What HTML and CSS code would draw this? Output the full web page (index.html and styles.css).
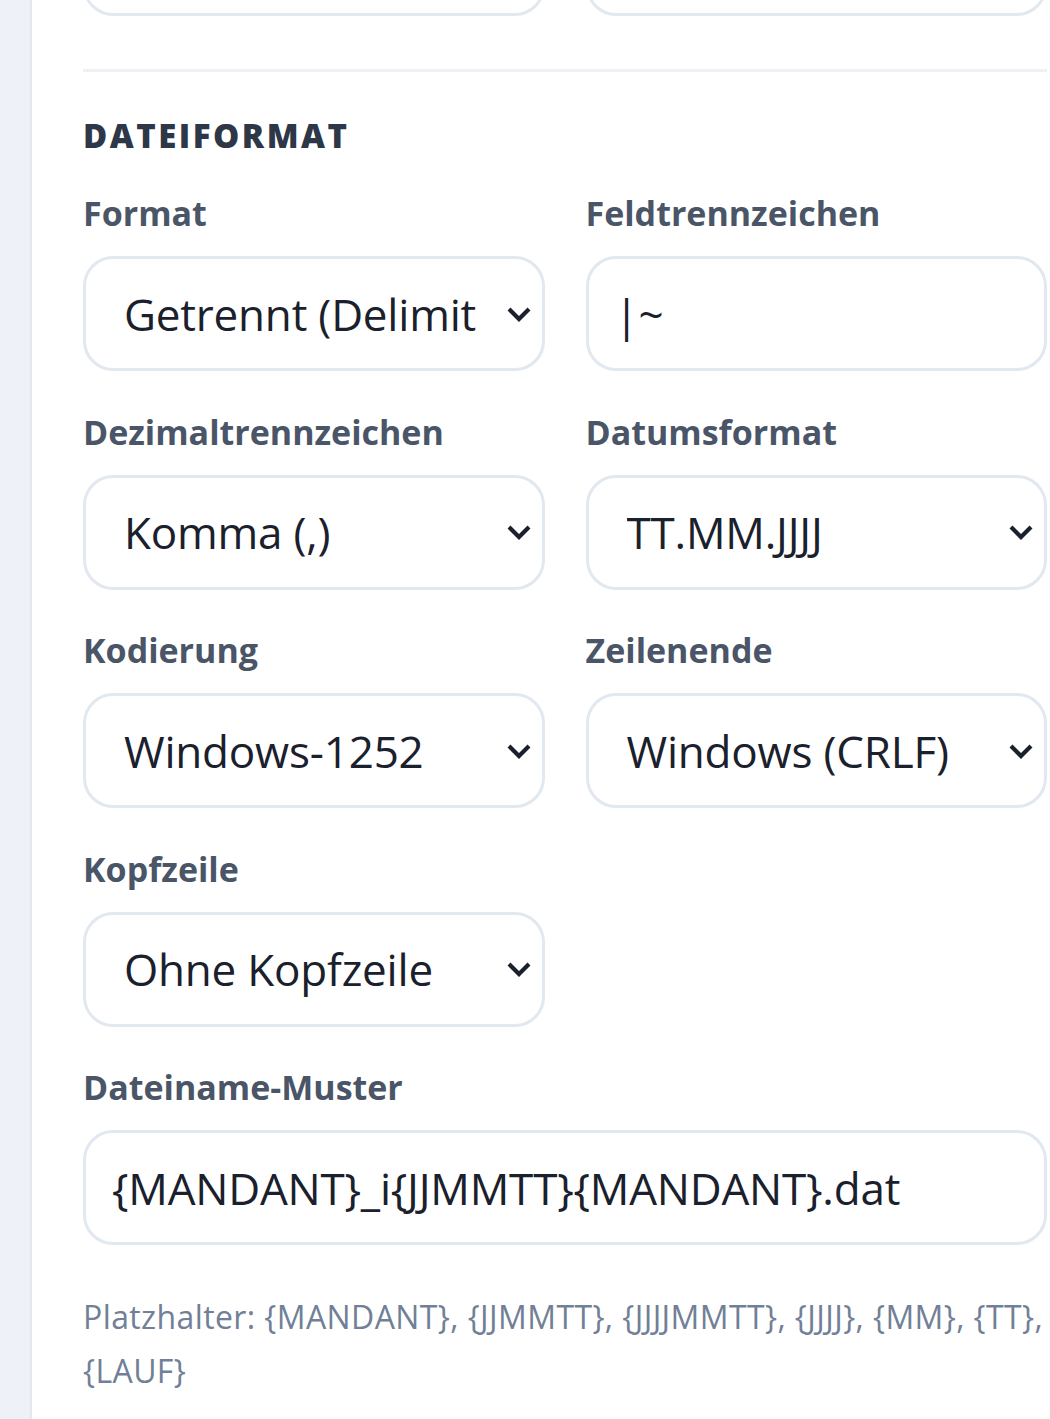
FILE: index.html
```html
<!DOCTYPE html>
<html lang="de">
  <head>
    <meta charset="UTF-8" />
    <meta name="viewport" content="width=device-width, initial-scale=1.0" />
    <title>Export-Einstellungen</title>
    <link rel="stylesheet" href="styles.css">
  </head>
  <body>
    <div class="layout">
      <aside class="sidebar"></aside>

      <main class="content">
        <div class="grid grid-top">
          <div class="field">
            <input class="control" type="text" value="" />
          </div>
          <div class="field">
            <input class="control" type="text" value="" />
          </div>
        </div>

        <hr class="divider" />

        <section class="section">
          <h2 class="section-title">Dateiformat</h2>

          <div class="grid">
            <div class="field">
              <label class="label" for="format">Format</label>
              <select id="format" class="control select">
                <option>Getrennt (Delimited)</option>
                <option>Feste Breite</option>
              </select>
            </div>

            <div class="field">
              <label class="label" for="delimiter">Feldtrennzeichen</label>
              <input id="delimiter" class="control" type="text" value="|~" />
            </div>

            <div class="field">
              <label class="label" for="decimal">Dezimaltrennzeichen</label>
              <select id="decimal" class="control select">
                <option>Komma (,)</option>
                <option>Punkt (.)</option>
              </select>
            </div>

            <div class="field">
              <label class="label" for="dateformat">Datumsformat</label>
              <select id="dateformat" class="control select">
                <option>TT.MM.JJJJ</option>
                <option>JJJJ-MM-TT</option>
              </select>
            </div>

            <div class="field">
              <label class="label" for="encoding">Kodierung</label>
              <select id="encoding" class="control select">
                <option>Windows-1252</option>
                <option>UTF-8</option>
              </select>
            </div>

            <div class="field">
              <label class="label" for="lineend">Zeilenende</label>
              <select id="lineend" class="control select">
                <option>Windows (CRLF)</option>
                <option>Unix (LF)</option>
              </select>
            </div>

            <div class="field">
              <label class="label" for="header">Kopfzeile</label>
              <select id="header" class="control select">
                <option>Ohne Kopfzeile</option>
                <option>Mit Kopfzeile</option>
              </select>
            </div>

            <div class="field field-wide">
              <label class="label" for="pattern">Dateiname-Muster</label>
              <input id="pattern" class="control" type="text" value="{MANDANT}_i{JJMMTT}{MANDANT}.dat" />
              <p class="help-text">
                Platzhalter: {MANDANT}, {JJMMTT}, {JJJJMMTT}, {JJJJ}, {MM}, {TT}, {LAUF}
              </p>
            </div>
          </div>
        </section>
      </main>
    </div>
  </body>
</html>
```

FILE: styles.css
```css
* {
  margin: 0;
  padding: 0;
  box-sizing: border-box;
}

body {
  width: 1050px;
  height: 1419px;
  overflow: hidden;
  background: #ffffff;
  font-family: "Open Sans", "Noto Sans", sans-serif;
  color: #1a202c;
}

.layout {
  display: flex;
  height: 100%;
}

.sidebar {
  flex: 0 0 32px;
  background: #eef1f7;
  border-right: 2px solid #e2e8f0;
}

.content {
  flex: 0 0 964px;
  margin-left: 51px;
}

.grid {
  display: grid;
  grid-template-columns: 1fr 1fr;
  column-gap: 41px;
  row-gap: 38.5px;
}

.grid-top {
  margin-top: -99px;
}

.field {
  display: flex;
  flex-direction: column;
}

.field-wide {
  grid-column: 1 / -1;
}

.control {
  width: 100%;
  height: 115px;
  padding: 0 26px;
  border: 3px solid #e2e8f0;
  border-radius: 30px;
  background: #ffffff;
  font-family: inherit;
  font-size: 44px;
  letter-spacing: -0.2px;
  color: #1a202c;
  outline: none;
}

.select {
  appearance: none;
  -webkit-appearance: none;
  padding: 0 65px 0 38px;
  background-image: url("data:image/svg+xml,%3Csvg xmlns='http://www.w3.org/2000/svg' width='26' height='16' viewBox='0 0 26 16'%3E%3Cpolyline points='3,3 13,13 23,3' fill='none' stroke='%231a202c' stroke-width='4.2'/%3E%3C/svg%3E");
  background-repeat: no-repeat;
  background-position: right 10px center;
  background-size: 26px 16px;
}

.divider {
  border: none;
  height: 3px;
  background: #edf1f6;
  margin-top: 53px;
}

.section-title {
  margin-top: 42px;
  font-size: 33px;
  line-height: 44px;
  font-weight: 800;
  letter-spacing: 2.5px;
  text-transform: uppercase;
  color: #2d3748;
  margin-bottom: 33px;
}

.label {
  font-size: 34px;
  line-height: 44px;
  font-weight: 700;
  color: #4a5568;
  margin-bottom: 21px;
}

.help-text {
  margin-top: 45px;
  font-size: 32px;
  line-height: 54px;
  letter-spacing: 0.4px;
  color: #718096;
}
```
